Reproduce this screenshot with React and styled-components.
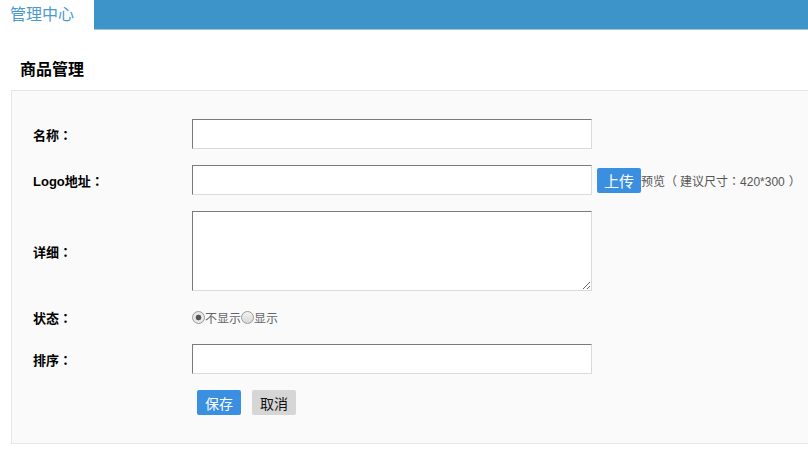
import React from 'react';
import styled, { createGlobalStyle } from 'styled-components';

const GlobalStyle = createGlobalStyle`
  html, body {
    margin: 0;
    padding: 0;
    background: #ffffff;
    overflow: hidden;
  }
  body {
    font-family: "Liberation Sans", "Noto Sans CJK SC", sans-serif;
    color: #000;
  }
`;

const TopBar = styled.div`
  display: flex;
  height: 29px;
  border-bottom: 1px solid #a8c4dc;
`;

const Tab = styled.div`
  width: 94px;
  background: #ffffff;
  color: #4a9bcc;
  font-size: 16px;
  line-height: 29px;
  padding-left: 10px;
  box-sizing: border-box;
  margin-bottom: -1px;
`;

const BarFill = styled.div`
  flex: 1;
  background: #3d94c8;
`;

const Title = styled.h2`
  margin: 0;
  padding: 29px 0 0 20px;
  height: 60px;
  box-sizing: border-box;
  font-size: 16px;
  font-weight: bold;
  line-height: 22px;
`;

const Panel = styled.div`
  margin-left: 11px;
  margin-right: -20px;
  background: #fafafa;
  border: 1px solid #e6e6e6;
  padding: 28px 0 28px 21px;
`;

const Row = styled.div`
  display: flex;
  align-items: center;
  margin-bottom: ${({ last }) => (last ? '0' : '16px')};
  min-height: ${({ h }) => h || 'auto'};
`;

const Label = styled.label`
  width: 159px;
  flex-shrink: 0;
  font-size: 13px;
  font-weight: bold;
`;

// centred full-width punctuation, as the reference's font draws it
const Punct = styled.span`
  font-family: "Noto Sans CJK TC", sans-serif;
  margin: ${({ m }) => m || '0'};
`;

const TextInput = styled.input`
  width: 400px;
  height: 30px;
  box-sizing: border-box;
  margin: 0;
  background: #fff;
  border-top: 1px solid #7a7a7a;
  border-left: 1px solid #7a7a7a;
  border-right: 1px solid #dadada;
  border-bottom: 1px solid #dadada;
  outline: none;
`;

const TextArea = styled.textarea`
  width: 400px;
  height: 80px;
  box-sizing: border-box;
  margin: 0;
  background: #fff;
  border-top: 1px solid #7a7a7a;
  border-left: 1px solid #7a7a7a;
  border-right: 1px solid #dadada;
  border-bottom: 1px solid #dadada;
  outline: none;
  display: block;
`;

const Button = styled.button`
  width: 44px;
  height: 25px;
  padding: 0;
  border: none;
  border-radius: 2px;
  font-family: "Liberation Sans", "Noto Sans CJK SC", sans-serif;
  font-size: ${({ big }) => (big ? '15px' : '14px')};
  background: ${({ secondary }) => (secondary ? '#d6d6d6' : '#3a8fe0')};
  color: ${({ secondary }) => (secondary ? '#111' : '#fff')};
  margin-left: ${({ ml }) => ml || '0'};
  cursor: pointer;
`;

const Hint = styled.span`
  font-size: 12px;
  color: #555;
`;

const RadioGroup = styled.div`
  display: flex;
  align-items: center;
  height: 20px;
  font-size: 12px;
  color: #666;
`;

const Radio = styled.span`
  width: 11px;
  height: 11px;
  border-radius: 50%;
  border: 1px solid #9a9a9a;
  background: ${({ checked }) =>
    checked
      ? 'radial-gradient(circle, #555 0 2.5px, #e8e8e8 3.2px)'
      : 'linear-gradient(#f2f2f2, #d8d8d8)'};
  display: inline-block;
`;

const Colon = () => <Punct>：</Punct>;

export default function App() {
  return (
    <>
      <GlobalStyle />
      <TopBar>
        <Tab>管理中心</Tab>
        <BarFill />
      </TopBar>
      <Title>商品管理</Title>
      <Panel>
        <Row>
          <Label>名称<Colon /></Label>
          <TextInput />
        </Row>
        <Row>
          <Label>Logo地址<Colon /></Label>
          <TextInput />
          <Button big ml="5px">上传</Button>
          <Hint>
            预览<Punct m="0 3px 0 0">（</Punct>建议尺寸<Punct>：</Punct>420*300<Punct m="0 0 0 4px">）</Punct>
          </Hint>
        </Row>
        <Row>
          <Label>详细<Colon /></Label>
          <TextArea />
        </Row>
        <Row h="21px">
          <Label>状态<Colon /></Label>
          <RadioGroup>
            <Radio checked />
            <span>不显示</span>
            <Radio />
            <span>显示</span>
          </RadioGroup>
        </Row>
        <Row>
          <Label>排序<Colon /></Label>
          <TextInput />
        </Row>
        <Row last>
          <Label />
          <Button ml="5px">保存</Button>
          <Button secondary ml="11px">取消</Button>
        </Row>
      </Panel>
    </>
  );
}
